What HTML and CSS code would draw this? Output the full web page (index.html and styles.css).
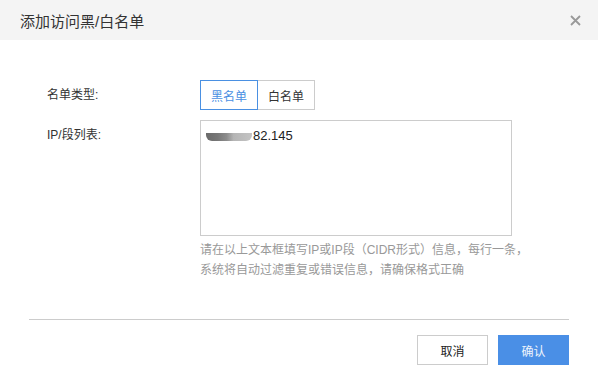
FILE: index.html
```html
<!DOCTYPE html>
<html lang="zh-CN">
<head>
  <meta charset="UTF-8" />
  <meta name="viewport" content="width=device-width, initial-scale=1" />
  <title>添加访问黑/白名单</title>
  <link rel="stylesheet" href="styles.css">
</head>
<body>
  <div class="dialog">
    <header class="dialog-header">
      <h1>添加访问黑/白名单</h1>
      <button class="close-btn" aria-label="关闭">
        <svg width="11" height="11" viewBox="0 0 11 11">
          <path d="M1 1L10 10M10 1L1 10" stroke="#999" stroke-width="1.8" fill="none" />
        </svg>
      </button>
    </header>

    <main class="dialog-body">
      <div class="form-row">
        <label class="form-label">名单类型:</label>
        <div class="radio-group">
          <button class="radio-btn active">黑名单</button>
          <button class="radio-btn">白名单</button>
        </div>
      </div>

      <div class="form-row">
        <label class="form-label">IP/段列表:</label>
        <div class="field">
          <div class="ip-box">
            <span class="masked"></span>82.145
          </div>
          <p class="hint">请在以上文本框填写IP或IP段（CIDR形式）信息，每行一条，<br>系统将自动过滤重复或错误信息，请确保格式正确</p>
        </div>
      </div>
    </main>

    <footer class="dialog-footer">
      <button class="btn">取消</button>
      <button class="btn btn-primary">确认</button>
    </footer>
  </div>
</body>
</html>
```

FILE: styles.css
```css
* {
  margin: 0;
  padding: 0;
  box-sizing: border-box;
}

body {
  font-family: "Liberation Sans", "Noto Sans CJK SC", sans-serif;
  background: #fff;
  color: #333;
  font-size: 12px;
}

.dialog {
  width: 598px;
  height: 380px;
  background: #fff;
}

.dialog-header {
  height: 40px;
  background: #f4f4f4;
  display: flex;
  align-items: center;
  justify-content: space-between;
  padding: 0 16px 0 20px;
}

.dialog-header h1 {
  font-size: 15px;
  font-weight: 400;
  color: #333;
}

.close-btn {
  background: none;
  border: none;
  width: 14px;
  height: 14px;
  display: flex;
  align-items: center;
  justify-content: center;
  cursor: pointer;
}

.dialog-body {
  height: 279px;
  padding-top: 40px;
  display: flex;
  flex-direction: column;
  gap: 10px;
}

.form-row {
  display: flex;
  align-items: flex-start;
}

.form-label {
  width: 200px;
  padding-left: 47px;
  line-height: 30px;
  color: #333;
}

.radio-group {
  display: flex;
}

.radio-btn {
  font-family: inherit;
  font-size: 12px;
  height: 30px;
  padding: 0 10px;
  background: #fff;
  color: #333;
  border: 1px solid #ccc;
  cursor: pointer;
}

.radio-btn + .radio-btn {
  border-left: none;
}

.radio-btn.active {
  border-color: #4a90e2;
  color: #4a90e2;
}

.field {
  width: 312px;
}

.ip-box {
  height: 116px;
  border: 1px solid #ccc;
  padding: 7px 5px;
  font-size: 13px;
  line-height: 16px;
  color: #222;
  display: flex;
  align-items: flex-start;
}

.masked {
  display: inline-block;
  width: 46px;
  height: 8px;
  margin-top: 5px;
  margin-right: 1px;
  border-radius: 0 0 6px 6px;
  background: linear-gradient(90deg, #6a6a6a 0%, #777 25%, #8c8c8c 45%, #b5b5b5 60%, #c4c4c4 100%);
}

.hint {
  margin-top: 4px;
  line-height: 20px;
  color: #999;
  white-space: nowrap;
}

.dialog-footer {
  margin: 0 29px;
  border-top: 1px solid #ccc;
  padding-top: 15px;
  display: flex;
  justify-content: flex-end;
  gap: 10px;
}

.btn {
  font-family: inherit;
  font-size: 12px;
  width: 71px;
  height: 30px;
  background: #fff;
  color: #222;
  border: 1px solid #ccc;
  cursor: pointer;
}

.btn-primary {
  background: #4a8fe6;
  border-color: #4a8fe6;
  color: #eef4fc;
}
```
